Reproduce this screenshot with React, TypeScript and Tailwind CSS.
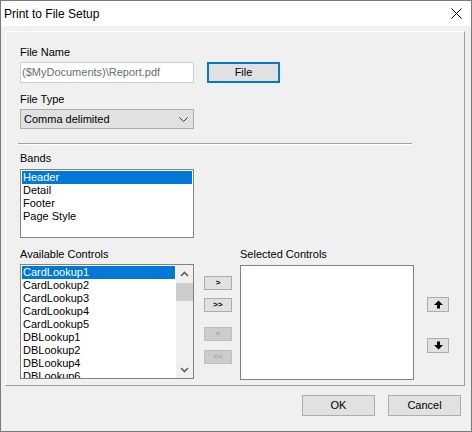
import React from "react";

// Delphi-style "Print to File Setup" dialog, Win10 chrome

const BANDS = ["Header", "Detail", "Footer", "Page Style"];
const AVAILABLE = [
  "CardLookup1",
  "CardLookup2",
  "CardLookup3",
  "CardLookup4",
  "CardLookup5",
  "DBLookup1",
  "DBLookup2",
  "DBLookup4",
  "DBLookup6",
];

function ScrollChevron({ dir }: { dir: "up" | "down" }) {
  return (
    <svg width="9" height="6" viewBox="0 0 9 6">
      <path
        d={dir === "up" ? "M1 5 L4.5 1.5 L8 5" : "M1 1 L4.5 4.5 L8 1"}
        stroke="#606060"
        strokeWidth="1.7"
        fill="none"
      />
    </svg>
  );
}

function MoveArrow({ dir }: { dir: "up" | "down" }) {
  return (
    <svg width="9" height="9" viewBox="0 0 9 9" className={dir === "down" ? "rotate-180" : ""}>
      <path d="M4.5 0.5 L9 5 L6 5 L6 8.5 L3 8.5 L3 5 L0 5 Z" fill="#000" />
    </svg>
  );
}

function ShiftButton({ label, disabled }: { label: string; disabled?: boolean }) {
  return (
    <div
      className={
        disabled
          ? "w-[28px] h-[14px] flex items-center justify-center border border-[#bfbfbf] bg-[#cccccc] text-[#a8a8a8] text-[8px] font-bold leading-none"
          : "w-[28px] h-[14px] flex items-center justify-center border border-[#adadad] bg-[#e1e1e1] text-black text-[8px] font-bold leading-none"
      }
    >
      {label}
    </div>
  );
}

export default function App() {
  return (
    <div className="w-[472px] h-[432px] border border-[#7a7a7a] bg-[#f0f0f0] flex flex-col overflow-hidden text-[11px] text-black font-['Liberation_Sans',Arial,sans-serif]">
      {/* Title bar */}
      <div className="h-[25px] shrink-0 bg-white flex items-center justify-between pl-[3px] pr-[9px]">
        <span className="text-[12px]">Print to File Setup</span>
        <svg width="11" height="11" viewBox="0 0 11 11">
          <path d="M0.5 0.5 L10.5 10.5 M10.5 0.5 L0.5 10.5" stroke="#000" strokeWidth="1" />
        </svg>
      </div>

      {/* Etched panel */}
      <div className="mt-[5px] ml-[4px] w-[460px] h-[355px] shrink-0 border border-t-white border-l-white border-r-[#a0a0a0] border-b-[#a0a0a0] flex flex-col pl-[14px]">
        <div className="mt-[14px] h-[13px] leading-[13px]">File Name</div>
        <div className="mt-[3px] flex items-start">
          <div className="w-[174px] h-[21px] border border-[#cfcfcf] bg-white text-[#6d6d6d] flex items-center pl-[1px]">
            ($MyDocuments)\Report.pdf
          </div>
          <div className="ml-[13px] w-[73px] h-[21px] border-2 border-[#0078d7] bg-[#e1e1e1] flex items-center justify-center">
            File
          </div>
        </div>

        <div className="mt-[10px] h-[13px] leading-[13px]">File Type</div>
        <div className="mt-[3px] w-[174px] h-[20px] border border-[#adadad] bg-[#e1e1e1] flex items-center justify-between pl-[3px] pr-[5px]">
          <span>Comma delimited</span>
          <svg width="9" height="5" viewBox="0 0 9 5">
            <path d="M0.5 0.5 L4.5 4.5 L8.5 0.5" stroke="#333" strokeWidth="1" fill="none" />
          </svg>
        </div>

        {/* Separator */}
        <div className="mt-[14px] ml-[-2px] w-[394px] h-[2px] border-t border-t-[#a0a0a0] border-b border-b-white" />

        <div className="mt-[7px] h-[13px] leading-[13px]">Bands</div>
        <div className="mt-[4px] w-[174px] h-[69px] border border-[#828282] bg-white p-[1px] flex flex-col">
          {BANDS.map((b, i) => (
            <div
              key={b}
              className={i === 0 ? "h-[13px] leading-[13px] pl-[1px] bg-[#0078d7] text-white" : "h-[13px] leading-[13px] pl-[1px]"}
            >
              {b}
            </div>
          ))}
        </div>

        <div className="mt-[10px] flex items-start">
          {/* Available */}
          <div className="w-[174px] flex flex-col">
            <div className="h-[13px] leading-[13px]">Available Controls</div>
            <div className="mt-[3px] h-[115px] border border-[#828282] bg-white flex">
              <div className="flex-1 p-[1px] overflow-hidden">
                {AVAILABLE.map((c, i) => (
                  <div
                    key={c}
                    className={i === 0 ? "h-[13px] leading-[13px] pl-[1px] bg-[#0078d7] text-white" : "h-[13px] leading-[13px] pl-[1px]"}
                  >
                    {c}
                  </div>
                ))}
              </div>
              <div className="w-[17px] bg-[#f0f0f0] flex flex-col">
                <div className="h-[17px] flex items-center justify-center">
                  <ScrollChevron dir="up" />
                </div>
                <div className="mt-[1px] h-[18px] bg-[#cdcdcd]" />
                <div className="flex-1" />
                <div className="h-[17px] flex items-center justify-center">
                  <ScrollChevron dir="down" />
                </div>
              </div>
            </div>
          </div>

          {/* Shift buttons */}
          <div className="ml-[10px] mt-[28px] flex flex-col">
            <ShiftButton label=">" />
            <div className="mt-[8px]">
              <ShiftButton label=">>" />
            </div>
            <div className="mt-[15px]">
              <ShiftButton label="<" disabled />
            </div>
            <div className="mt-[9px]">
              <ShiftButton label="<<" disabled />
            </div>
          </div>

          {/* Selected */}
          <div className="ml-[8px] w-[174px] flex flex-col">
            <div className="h-[13px] leading-[13px]">Selected Controls</div>
            <div className="mt-[4px] h-[115px] border border-[#828282] bg-white" />
          </div>

          {/* Order buttons */}
          <div className="ml-[13px] mt-[49px] flex flex-col">
            <div className="w-[22px] h-[15px] border border-[#adadad] bg-[#e1e1e1] flex items-center justify-center">
              <MoveArrow dir="up" />
            </div>
            <div className="mt-[26px] w-[22px] h-[15px] border border-[#adadad] bg-[#e1e1e1] flex items-center justify-center">
              <MoveArrow dir="down" />
            </div>
          </div>
        </div>
      </div>

      {/* Dialog buttons */}
      <div className="mt-[9px] flex justify-end gap-[13px] pr-[10px]">
        <div className="w-[73px] h-[21px] border border-[#adadad] bg-[#e1e1e1] flex items-center justify-center">OK</div>
        <div className="w-[73px] h-[21px] border border-[#adadad] bg-[#e1e1e1] flex items-center justify-center">Cancel</div>
      </div>
    </div>
  );
}
